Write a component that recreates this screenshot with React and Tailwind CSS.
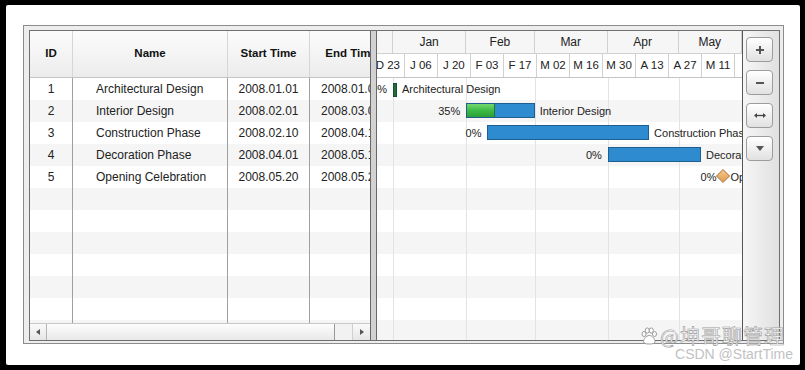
import React from 'react'

const PX_DAY = 2.36
const ORIGIN = -5.2 // local x of 2007.12.23
const VIEW_W = 365

const x = (day) => ORIGIN + day * PX_DAY

const MONTHS = [
    { label: '', days: 9 },
    { label: 'Jan', days: 31 },
    { label: 'Feb', days: 29 },
    { label: 'Mar', days: 31 },
    { label: 'Apr', days: 30 },
    { label: 'May', days: 31 },
]

const WEEKS = ['D 23', 'J 06', 'J 20', 'F 03', 'F 17', 'M 02', 'M 16', 'M 30', 'A 13', 'A 27', 'M 11', '']

const TASKS = [
    { id: 1, name: 'Architectural Design', start: '2008.01.01', end: '2008.01.02', from: 9, to: 10.7, pct: '0%', type: 'thin' },
    { id: 2, name: 'Interior Design', start: '2008.02.01', end: '2008.03.01', from: 40, to: 69, pct: '35%', fill: 0.4, type: 'bar' },
    { id: 3, name: 'Construction Phase', start: '2008.02.10', end: '2008.04.18', from: 49, to: 117.5, pct: '0%', fill: 0, type: 'bar' },
    { id: 4, name: 'Decoration Phase', start: '2008.04.01', end: '2008.05.10', from: 100, to: 139.5, pct: '0%', fill: 0, type: 'bar' },
    { id: 5, name: 'Opening Celebration', start: '2008.05.20', end: '2008.05.20', from: 149, to: 149, pct: '0%', type: 'milestone' },
]

const EMPTY_ROWS = 7

function monthCells() {
    let day = 0
    return MONTHS.map(m => {
        const left = x(day)
        const right = Math.min(x(day + m.days), VIEW_W)
        day += m.days
        return { ...m, width: right - left }
    })
}

function monthLines() {
    let day = 0
    const lines = []
    MONTHS.forEach((m, i) => {
        if (i > 0) lines.push(x(day))
        day += m.days
    })
    return lines
}

function TableRow({ task, index }) {
    const grey = index % 2 === 1
    return (
        <div className={`flex h-[22px] text-[12px] text-[#222] ${grey ? 'bg-[#f5f5f5]' : 'bg-white'}`}>
            <div className="w-[43px] shrink-0 border-r border-[#a0a0a0] flex items-center justify-center">{task?.id}</div>
            <div className="w-[155px] shrink-0 border-r border-[#a0a0a0] flex items-center pl-[23px]">{task?.name}</div>
            <div className="w-[82px] shrink-0 border-r border-[#a0a0a0] flex items-center justify-center">{task?.start}</div>
            <div className="w-[82px] shrink-0 flex items-center justify-center">{task?.end}</div>
        </div>
    )
}

function GanttRow({ task }) {
    const left = x(task.from)
    const width = x(task.to) - left

    return (
        <div className="relative h-[22px] text-[11px] text-[#222]">
            <span className="absolute top-[4px] w-[40px] text-right leading-[14px]" style={{ left: left - (task.type === 'milestone' ? 47 : 46) }}>
                {task.pct}
            </span>

            {task.type === 'thin' && (
                <div className="absolute top-[5px] h-[14px] bg-[#1f6e3c] border border-[#15522b]" style={{ left, width: 4 }} />
            )}

            {task.type === 'bar' && (
                <div className="absolute top-[3px] h-[15px] border border-[#1e5f92] bg-[#2e8bd0] overflow-hidden" style={{ left, width }}>
                    {task.fill > 0 && (
                        <div className="h-full bg-gradient-to-b from-[#72d86e] via-[#3cbb45] to-[#2a9e36] border-r border-[#1f7a2a]" style={{ width: width * task.fill }} />
                    )}
                </div>
            )}

            {task.type === 'milestone' && (
                <div className="absolute top-[5px] w-[10px] h-[10px] rotate-45 bg-gradient-to-br from-[#f4c98a] to-[#e39b4c] border border-[#b7793a]" style={{ left: left - 5 }} />
            )}

            <span className="absolute top-[4px] whitespace-nowrap leading-[14px]" style={{ left: (task.type === 'thin' ? left + 4 : left + width) + (task.type === 'milestone' ? 7 : 5) }}>
                {task.name}
            </span>
        </div>
    )
}

function ToolButton({ children }) {
    return (
        <button className="w-[27px] h-[25px] rounded-[4px] border border-[#9c9c9c] bg-gradient-to-b from-white to-[#e1e1e1] flex items-center justify-center shadow-[inset_0_1px_0_#fff]">
            {children}
        </button>
    )
}

export default function App() {
    const months = monthCells()
    const lines = monthLines()

    return (
        <div className="w-[805px] h-[370px] overflow-hidden bg-black pt-[5px] pl-[6px] font-['Liberation_Sans',Arial,sans-serif]">
            <div className="relative w-[794px] h-[360px] bg-white rounded-[2px] pt-[20px] pl-[17px]">
                {/* outer frame */}
                <div className="w-[761px] h-[319px] border border-[#8c8c8c] bg-[#ededed] pl-[5px] pt-[4px] pr-[3px] pb-[2px]">
                    <div className="flex h-full border border-[#707070] bg-white">

                        {/* grid */}
                        <div className="w-[340px] shrink-0 flex flex-col overflow-hidden">
                            <div className="flex h-[47px] shrink-0 border-b border-[#c4c4c4] bg-gradient-to-b from-[#fcfcfc] to-[#ececec] text-[11.5px] font-bold text-[#111]">
                                <div className="w-[43px] shrink-0 border-r border-[#d6d6d6] flex items-center justify-center">ID</div>
                                <div className="w-[155px] shrink-0 border-r border-[#d6d6d6] flex items-center justify-center">Name</div>
                                <div className="w-[82px] shrink-0 border-r border-[#d6d6d6] flex items-center justify-center">Start Time</div>
                                <div className="w-[82px] shrink-0 flex items-center justify-center whitespace-nowrap">End Time</div>
                            </div>
                            <div className="flex-1 overflow-hidden">
                                {TASKS.map((t, i) => <TableRow key={t.id} task={t} index={i} />)}
                                {Array.from({ length: EMPTY_ROWS }).map((_, i) => (
                                    <TableRow key={`e${i}`} index={TASKS.length + i} />
                                ))}
                            </div>
                            {/* horizontal scrollbar */}
                            <div className="flex h-[17px] shrink-0 border-t border-[#c8c8c8] bg-[#efefef]">
                                <div className="w-[17px] shrink-0 border-r border-[#b4b4b4] bg-gradient-to-b from-[#fafafa] to-[#e6e6e6] flex items-center justify-center">
                                    <svg width="4" height="6" viewBox="0 0 4 6"><path d="M4 0 L0 3 L4 6 Z" fill="#555" /></svg>
                                </div>
                                <div className="w-[288px] shrink-0 border-r border-[#9a9a9a] bg-gradient-to-b from-[#fdfdfd] to-[#e9e9e9]" />
                                <div className="w-[18px] shrink-0 border-r border-[#cfcfcf] bg-[#f2f2f2]" />
                                <div className="flex-1 bg-gradient-to-b from-[#fafafa] to-[#e6e6e6] flex items-center justify-center">
                                    <svg width="4" height="6" viewBox="0 0 4 6"><path d="M0 0 L4 3 L0 6 Z" fill="#555" /></svg>
                                </div>
                            </div>
                        </div>

                        {/* splitter */}
                        <div className="w-[7px] shrink-0 border-x border-[#686868] bg-[#d2d2d2]" />

                        {/* gantt */}
                        <div className="w-[365px] shrink-0 flex flex-col overflow-hidden">
                            <div className="h-[47px] shrink-0 border-b border-[#c4c4c4] text-[#222]">
                                <div className="flex h-[23px] border-b border-[#d0d0d0] bg-[#f6f6f6] text-[12px] whitespace-nowrap" style={{ marginLeft: ORIGIN }}>
                                    {months.map((m, i) => (
                                        <div key={i} className="shrink-0 border-r border-[#d0d0d0] flex items-center justify-center overflow-hidden" style={{ width: m.width }}>
                                            {m.label}
                                        </div>
                                    ))}
                                </div>
                                <div className="flex h-[23px] bg-white text-[11.5px] whitespace-nowrap" style={{ marginLeft: ORIGIN }}>
                                    {WEEKS.map((w, i) => (
                                        <div key={i} className="shrink-0 border-r border-[#d0d0d0] flex items-center justify-center" style={{ width: 14 * PX_DAY }}>
                                            {w}
                                        </div>
                                    ))}
                                </div>
                            </div>
                            <div className="relative flex-1 overflow-hidden bg-[image:repeating-linear-gradient(180deg,#ffffff_0px,#ffffff_22px,#f5f5f5_22px,#f5f5f5_44px)]">
                                {lines.map((l, i) => (
                                    <div key={i} className="absolute top-0 bottom-0 w-px bg-[#e3e3e3]" style={{ left: l }} />
                                ))}
                                <div className="relative">
                                    {TASKS.map(t => <GanttRow key={t.id} task={t} />)}
                                </div>
                            </div>
                        </div>

                        {/* zoom tools */}
                        <div className="flex-1 border-l border-[#555] bg-gradient-to-r from-[#f6f6f6] to-[#e0e0e0] flex flex-col gap-[8px] pt-[6px] pl-[3px]">
                            <ToolButton>
                                <svg width="8" height="8" viewBox="0 0 8 8"><path d="M4 0v8M0 4h8" stroke="#555" strokeWidth="2" /></svg>
                            </ToolButton>
                            <ToolButton>
                                <svg width="8" height="8" viewBox="0 0 8 8"><path d="M0 4h8" stroke="#555" strokeWidth="2" /></svg>
                            </ToolButton>
                            <ToolButton>
                                <svg width="12" height="7" viewBox="0 0 12 7"><path d="M2 3.5h8" stroke="#444" strokeWidth="1.3" /><path d="M0 3.5 L3 1 L3 6 Z M12 3.5 L9 1 L9 6 Z" fill="#444" /></svg>
                            </ToolButton>
                            <ToolButton>
                                <svg width="8" height="5" viewBox="0 0 8 5"><path d="M0 0 L8 0 L4 5 Z" fill="#555" /></svg>
                            </ToolButton>
                        </div>
                    </div>
                </div>

                {/* watermark */}
                <div className="absolute right-[7px] bottom-[4px] flex flex-col items-end pointer-events-none">
                    <div className="flex items-center gap-[2px] mr-[8px]">
                        <svg width="18" height="18" viewBox="0 0 18 18">
                            <g fill="#fff" stroke="#9a9a9a" strokeWidth="1">
                                <ellipse cx="4" cy="7" rx="2" ry="2.5" />
                                <ellipse cx="7.3" cy="3.5" rx="2" ry="2.6" />
                                <ellipse cx="11.3" cy="3.5" rx="2" ry="2.6" />
                                <ellipse cx="14.5" cy="7" rx="2" ry="2.5" />
                                <path d="M9.2 8.5 C6 8.5 3.5 12.5 3.5 14.5 C3.5 16.5 5.5 17 9.2 17 C13 17 15 16.5 15 14.5 C15 12.5 12.5 8.5 9.2 8.5 Z" />
                            </g>
                        </svg>
                        <span className="text-[20px] leading-[22px] tracking-[1px] text-white [-webkit-text-stroke:0.6px_#9a9a9a] font-['Noto_Sans_CJK_SC','Noto_Sans',sans-serif]">
                            @坤哥聊管理
                        </span>
                    </div>
                    <span className="text-[14px] leading-[14px] text-[#c2c2c2] font-['Liberation_Sans',Arial,sans-serif]">CSDN @StartTime</span>
                </div>
            </div>
        </div>
    )
}
